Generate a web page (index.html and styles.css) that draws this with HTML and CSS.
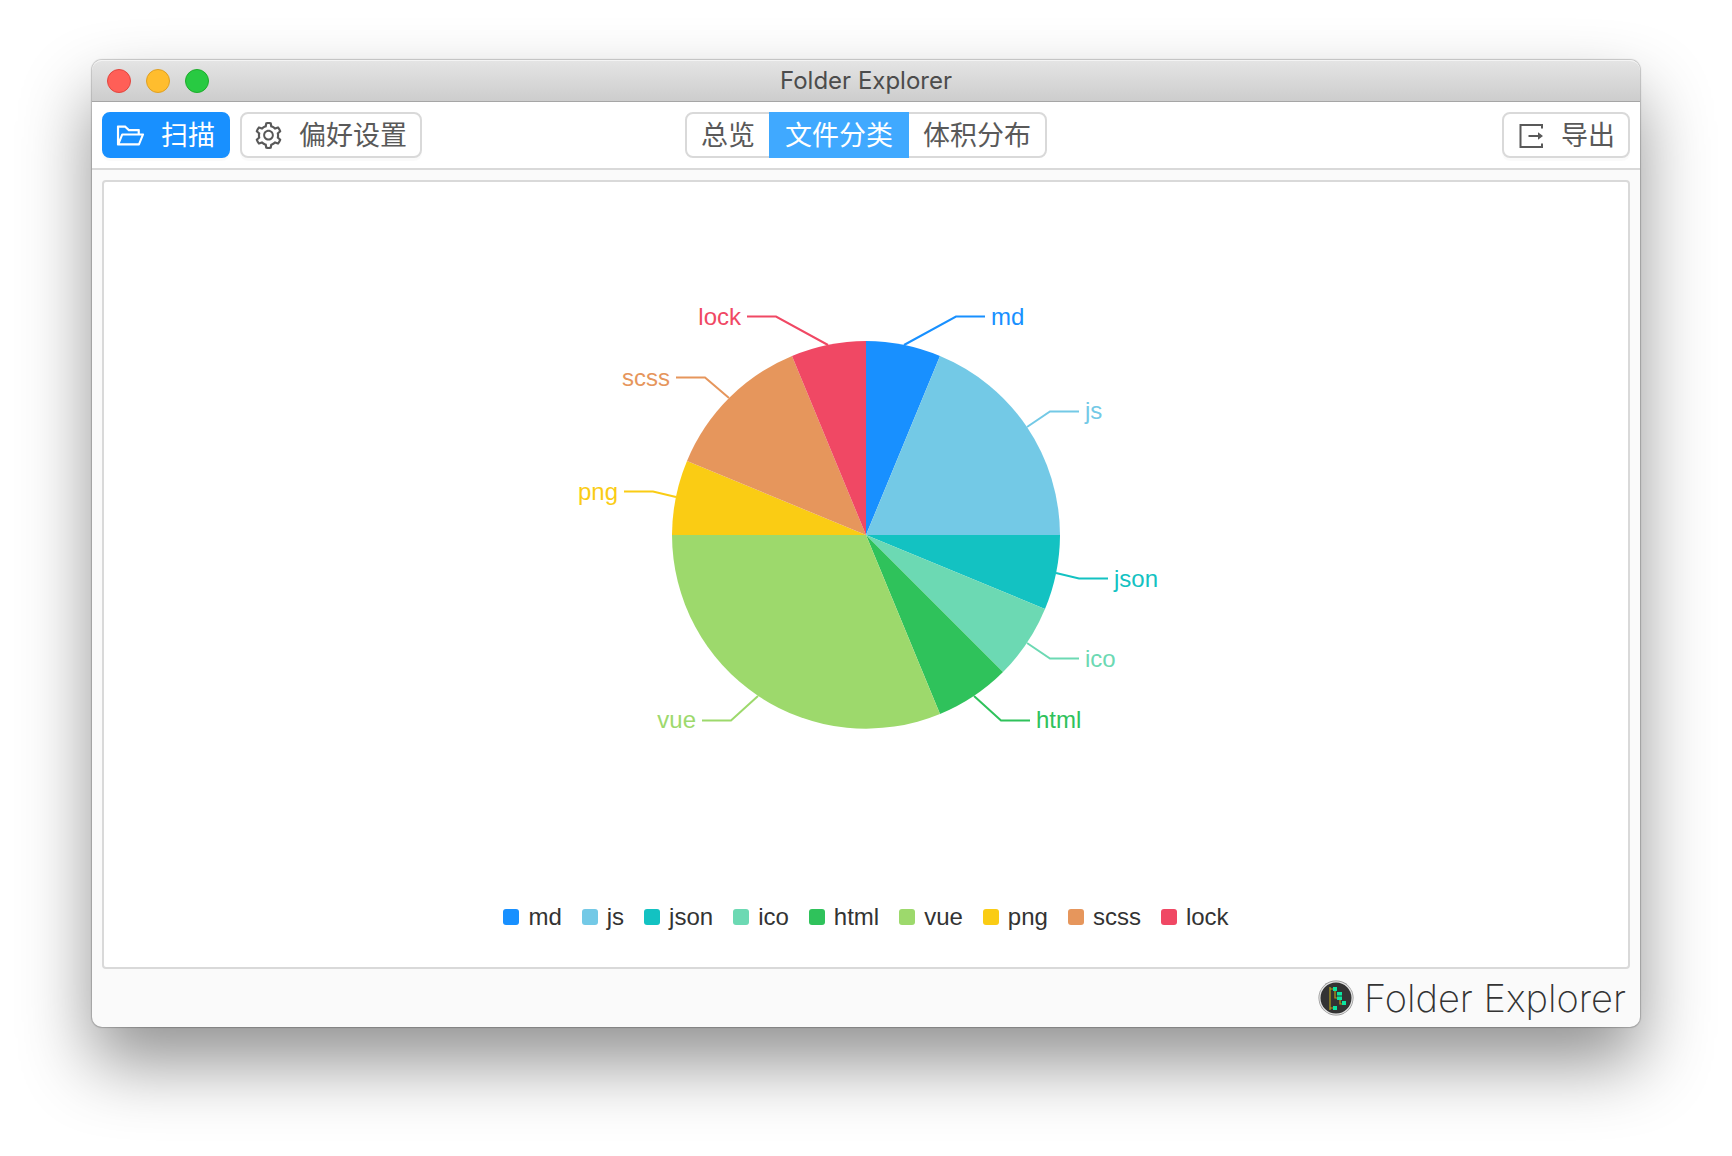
FILE: index.html
```html
<!DOCTYPE html>
<html lang="zh-CN">
<head>
<meta charset="utf-8">
<title>Folder Explorer</title>
<link rel="stylesheet" href="styles.css">
</head>
<body>
<div class="window">
  <header class="titlebar">
    <div class="lights">
      <button class="light light-close" type="button" aria-label="关闭"></button>
      <button class="light light-min" type="button" aria-label="最小化"></button>
      <button class="light light-zoom" type="button" aria-label="缩放"></button>
    </div>
    <h1 class="title">Folder Explorer</h1>
  </header>

  <nav class="toolbar">
    <div class="tools">
      <button class="btn btn-primary" type="button">
        <svg class="icon" viewBox="0 0 1024 1024" aria-hidden="true"><path d="M928 444H820V330.4c0-17.7-14.3-32-32-32H473L355.7 186.2a8.15 8.15 0 0 0-5.5-2.2H96c-17.7 0-32 14.3-32 32v592c0 17.7 14.3 32 32 32h698c13 0 24.8-7.9 29.7-20l134-332c1.5-3.8 2.3-7.9 2.3-12 0-17.7-14.3-32-32-32zM136 256h188.5l119.6 114.4H748V444H238c-13 0-24.8 7.9-29.7 20L136 643.2V256zm635.3 512H159l103.3-256h612.4L771.3 768z"/></svg>
        <span>扫描</span>
      </button>
      <button class="btn" type="button">
        <svg class="icon" viewBox="0 0 1024 1024" aria-hidden="true"><path d="M924.8 625.7l-65.5-56c3.1-19 4.7-38.4 4.7-57.8s-1.6-38.8-4.7-57.8l65.5-56a32.03 32.03 0 0 0 9.3-35.2l-.9-2.6a443.74 443.74 0 0 0-79.7-137.9l-1.8-2.1a32.12 32.12 0 0 0-35.1-9.5l-81.3 28.9c-30-24.6-63.5-44-99.7-57.6l-15.7-85a32.05 32.05 0 0 0-25.8-25.7l-2.7-.5c-52.1-9.4-106.9-9.4-159 0l-2.7.5a32.05 32.05 0 0 0-25.8 25.7l-15.8 85.4a351.86 351.86 0 0 0-99 57.4l-81.9-29.1a32 32 0 0 0-35.1 9.5l-1.8 2.1a446.02 446.02 0 0 0-79.7 137.9l-.9 2.6c-4.5 12.5-.8 26.5 9.3 35.2l66.3 56.6c-3.1 18.8-4.6 38-4.6 57.1 0 19.2 1.5 38.4 4.6 57.1L99 625.5a32.03 32.03 0 0 0-9.3 35.2l.9 2.6c18.1 50.4 44.9 96.9 79.7 137.9l1.8 2.1a32.12 32.12 0 0 0 35.1 9.5l81.9-29.1c29.8 24.5 63.1 43.9 99 57.4l15.8 85.4a32.05 32.05 0 0 0 25.8 25.7l2.7.5a449.4 449.4 0 0 0 159 0l2.7-.5a32.05 32.05 0 0 0 25.8-25.7l15.7-85a350 350 0 0 0 99.7-57.6l81.3 28.9a32 32 0 0 0 35.1-9.5l1.8-2.1c34.8-41.1 61.6-87.5 79.7-137.9l.9-2.6c4.5-12.3.8-26.3-9.3-35zM788.3 465.9c2.5 15.1 3.8 30.6 3.8 46.1s-1.3 31-3.8 46.1l-6.6 40.1 74.7 63.9a370.03 370.03 0 0 1-42.6 73.6L721 702.8l-31.4 25.8c-23.9 19.6-50.5 35-79.3 45.8l-38.1 14.3-17.9 97a377.5 377.5 0 0 1-85 0l-17.9-97.2-37.8-14.5c-28.5-10.8-55-26.2-78.7-45.7l-31.4-25.9-93.4 33.2c-17-22.9-31.2-47.6-42.6-73.6l75.5-64.5-6.5-40c-2.4-14.9-3.7-30.3-3.7-45.5 0-15.3 1.2-30.6 3.7-45.5l6.5-40-75.5-64.5c11.3-26.1 25.6-50.7 42.6-73.6l93.4 33.2 31.4-25.9c23.7-19.5 50.2-34.9 78.7-45.7l37.9-14.3 17.9-97.2c28.1-3.2 56.8-3.2 85 0l17.9 97 38.1 14.3c28.7 10.8 55.4 26.2 79.3 45.8l31.4 25.8 92.8-32.9c17 22.9 31.2 47.6 42.6 73.6L781.8 426l6.5 39.9zM512 326c-97.2 0-176 78.8-176 176s78.8 176 176 176 176-78.8 176-176-78.8-176-176-176zm79.2 255.2A111.6 111.6 0 0 1 512 614c-29.9 0-58-11.7-79.2-32.8A111.6 111.6 0 0 1 400 502c0-29.9 11.7-58 32.8-79.2C454 401.6 482.1 390 512 390c29.9 0 58 11.6 79.2 32.8A111.6 111.6 0 0 1 624 502c0 29.9-11.7 58-32.8 79.2z"/></svg>
        <span>偏好设置</span>
      </button>
    </div>
    <div class="segments">
      <button class="segment" type="button">总览</button>
      <button class="segment segment-active" type="button" aria-pressed="true">文件分类</button>
      <button class="segment" type="button">体积分布</button>
    </div>
    <div class="tools tools-end">
      <button class="btn" type="button">
        <svg class="icon" viewBox="0 0 31 31" aria-hidden="true"><path d="M27 8.500V5H5.500v22H27v-3.500" fill="none" stroke="currentColor" stroke-width="2"/><path d="M13.500 15H23v-2.800l5 3.800-5 3.800V17h-9.500z"/></svg>
        <span>导出</span>
      </button>
    </div>
  </nav>

  <main class="content">
    <section class="panel">
      <div class="chart">
        <svg class="pie" viewBox="-300 -240 600 480" role="img" aria-label="文件分类">
          <g class="c-md"><path class="slice" d="M0 0V-194A194 194 0 0 1 74 -179Z"/><path class="leader" d="M38 -190L90 -218.500H119"/><text x="125" y="-210">md</text></g>
          <g class="c-js"><path class="slice" d="M0 0L74 -179A194 194 0 0 1 194 0Z"/><path class="leader" d="M161 -108L184 -123.500H213"/><text x="219" y="-116">js</text></g>
          <g class="c-json"><path class="slice" d="M0 0H194A194 194 0 0 1 179 74Z"/><path class="leader" d="M190 38L213 43.500H242"/><text x="248" y="52">json</text></g>
          <g class="c-ico"><path class="slice" d="M0 0L179 74A194 194 0 0 1 137 137Z"/><path class="leader" d="M161 108L184 123.500H213"/><text x="219" y="132">ico</text></g>
          <g class="c-html"><path class="slice" d="M0 0L137 137A194 194 0 0 1 74 179Z"/><path class="leader" d="M108 161L135 185.500H164"/><text x="170" y="193">html</text></g>
          <g class="c-vue"><path class="slice" d="M0 0L74 179A194 194 0 0 1 -194 0Z"/><path class="leader" d="M-108 161L-135 185.500H-164"/><text class="left" x="-170" y="193">vue</text></g>
          <g class="c-png"><path class="slice" d="M0 0H-194A194 194 0 0 1 -179 -74Z"/><path class="leader" d="M-190 -38L-213 -43.500H-242"/><text class="left" x="-248" y="-35">png</text></g>
          <g class="c-scss"><path class="slice" d="M0 0L-179 -74A194 194 0 0 1 -74 -179Z"/><path class="leader" d="M-137 -137L-161 -157.500H-190"/><text class="left" x="-196" y="-149">scss</text></g>
          <g class="c-lock"><path class="slice" d="M0 0L-74 -179A194 194 0 0 1 0 -194Z"/><path class="leader" d="M-38 -190L-90 -218.500H-119"/><text class="left" x="-125" y="-210">lock</text></g>
        </svg>
      </div>
      <ul class="legend">
        <li class="c-md">md</li>
        <li class="c-js">js</li>
        <li class="c-json">json</li>
        <li class="c-ico">ico</li>
        <li class="c-html">html</li>
        <li class="c-vue">vue</li>
        <li class="c-png">png</li>
        <li class="c-scss">scss</li>
        <li class="c-lock">lock</li>
      </ul>
    </section>
  </main>

  <footer class="footer">
    <svg class="logo" viewBox="0 0 36 36" aria-hidden="true">
      <circle cx="18" cy="18" r="17.500" fill="#8d8d8d"/>
      <circle cx="18" cy="18" r="16.800" fill="#e4e4e4"/>
      <circle cx="18" cy="18" r="15.500" fill="#333"/>
      <path d="M12 7v23M12 9h4M12 28h4M17 11v7h4M22 19v5h3" fill="none" stroke="#b5a014" stroke-width="1.200"/>
      <path d="M15 7h4v4h-4zM19 12h5v3.500h-5zM19 16.500h5v3.500h-5zM24 21h4v4h-4zM15 26h4v4h-4z" fill="#0be5a0"/>
    </svg>
    <span class="brand">Folder Explorer</span>
  </footer>
</div>
</body>
</html>
```
FILE: styles.css
```css
* {
  box-sizing: border-box;
}

body {
  margin: 0;
  min-height: 100vh;
  padding: 60px 92px 129px;
  display: flex;
  background: #fff;
  color: #595959;
  font-family: "Liberation Sans", "Noto Sans CJK SC", sans-serif;
}

button {
  font: inherit;
  color: inherit;
}

.window {
  flex: 1;
  display: flex;
  flex-direction: column;
  border-radius: 10px;
  background: #fafafa;
  box-shadow: 0 0 1px 1px rgba(0, 0, 0, 0.2), 0 36px 70px rgba(0, 0, 0, 0.43);
}

/* Title bar */
.titlebar {
  display: grid;
  grid-template-columns: 1fr auto 1fr;
  align-items: center;
  height: 42px;
  padding: 0 15px;
  border-radius: 10px 10px 0 0;
  border-top: 1px solid #f4f4f4;
  border-bottom: 1px solid #a6a6a6;
  background: linear-gradient(#e4e4e4, #cdcdcd);
}

.lights {
  display: flex;
  gap: 15px;
}

.light {
  width: 24px;
  height: 24px;
  padding: 0;
  border: 1px solid;
  border-radius: 50%;
}

.light-close {
  background: #ff5f57;
  border-color: #e2463f;
}

.light-min {
  background: #ffbd2e;
  border-color: #dfa023;
}

.light-zoom {
  background: #28ca42;
  border-color: #1dad2b;
}

.title {
  margin: 0;
  font: 400 24px/30px Inter, sans-serif;
  color: #4c4c4c;
}

/* Toolbar */
.toolbar {
  display: grid;
  grid-template-columns: 1fr auto 1fr;
  align-items: center;
  padding: 10px;
  background: #fff;
  border-bottom: 2px solid #d9d9d9;
}

.tools {
  display: flex;
  gap: 10px;
}

.tools-end {
  justify-content: flex-end;
}

.btn,
.segment {
  height: 46px;
  border: 2px solid #d9d9d9;
  background: #fff;
  font-size: 27px;
  line-height: 40px;
  white-space: nowrap;
}

.btn {
  display: flex;
  align-items: center;
  gap: 15px;
  padding: 0 13px 0 11px;
  border-radius: 8px;
  box-shadow: 0 3px 0 rgba(0, 0, 0, 0.02);
}

.btn span {
  padding-top: 2px;
}

.btn-primary {
  border-color: #1890ff;
  background: #1890ff;
  color: #fff;
}

.icon {
  width: 31px;
  height: 31px;
  fill: currentColor;
}

.segments {
  display: flex;
}

.segment {
  padding: 2px 14px 0;
}

.segment + .segment {
  margin-left: -2px;
}

.segment:first-child {
  border-radius: 8px 0 0 8px;
}

.segment:last-child {
  border-radius: 0 8px 8px 0;
}

.segment-active {
  z-index: 1;
  border-color: #40a9ff;
  background: #40a9ff;
  color: #fff;
}

/* Chart panel */
.content {
  flex: 1;
  display: flex;
  padding: 10px 10px 0;
}

.panel {
  flex: 1;
  display: flex;
  flex-direction: column;
  padding-bottom: 36px;
  border: 2px solid #d9d9d9;
  border-radius: 4px;
  background: #fff;
}

.chart {
  flex: 1;
  display: flex;
  align-items: center;
  justify-content: center;
  padding-bottom: 16px;
}

.pie {
  width: 600px;
  height: 480px;
  overflow: visible;
  font-size: 24px;
}

.pie text {
  fill: var(--color);
}

.left {
  text-anchor: end;
}

.slice {
  fill: var(--color);
}

.leader {
  fill: none;
  stroke: var(--color);
  stroke-width: 2;
}

.c-md { --color: #1890ff; }
.c-js { --color: #73c9e6; }
.c-json { --color: #13c2c2; }
.c-ico { --color: #6cd9b3; }
.c-html { --color: #2fc25b; }
.c-vue { --color: #9dd96c; }
.c-png { --color: #facc14; }
.c-scss { --color: #e6965c; }
.c-lock { --color: #f04864; }

.legend {
  display: flex;
  justify-content: center;
  gap: 20px;
  margin: 0;
  padding: 0;
  list-style: none;
  font-size: 24px;
  line-height: 28px;
  color: #333;
}

.legend li {
  display: flex;
  align-items: center;
  gap: 9px;
}

.legend li::before {
  content: "";
  width: 16px;
  height: 16px;
  border-radius: 3px;
  background: var(--color);
}

/* Footer */
.footer {
  display: flex;
  align-items: center;
  justify-content: flex-end;
  gap: 10px;
  height: 58px;
  padding: 0 14px;
}

.logo {
  width: 36px;
  height: 36px;
}

.brand {
  font: 200 38px/48px Inter, sans-serif;
  color: #333;
}
```
